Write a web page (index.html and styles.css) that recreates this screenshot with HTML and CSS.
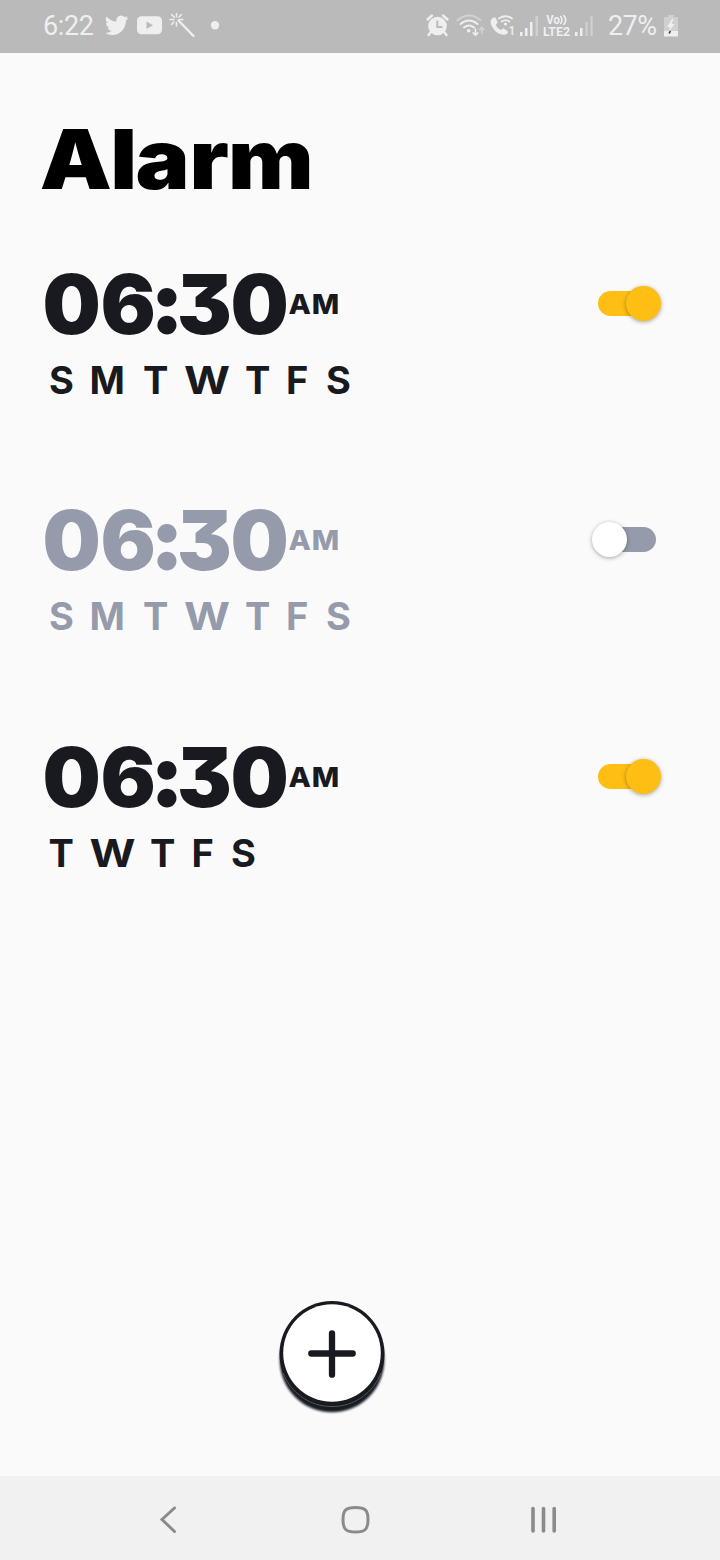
FILE: index.html
```html
<!DOCTYPE html>
<html lang="en">
<head>
<meta charset="utf-8">
<title>Alarm</title>
<link rel="stylesheet" href="styles.css">
</head>
<body>
<div class="screen">
  <header class="status">
    <svg class="status-art" viewBox="0 0 720 53">
      <text class="clock" x="43" y="35" textLength="51">6:22</text>
      <path transform="translate(105 13.3) scale(.97 1)" d="M23.95 4.57a10 10 0 0 1-2.82.77 4.96 4.96 0 0 0 2.16-2.72c-.95.56-2 .96-3.13 1.18a4.92 4.92 0 0 0-8.38 4.48C7.69 8.1 4.07 6.13 1.64 3.16a4.92 4.92 0 0 0 1.52 6.57 4.9 4.9 0 0 1-2.23-.61v.06a4.92 4.92 0 0 0 3.95 4.83 5 5 0 0 1-2.21.08 4.94 4.94 0 0 0 4.6 3.42A9.87 9.87 0 0 1 0 19.54a14 14 0 0 0 7.55 2.21c9.05 0 14-7.5 14-13.98 0-.21 0-.42-.02-.63a9.94 9.94 0 0 0 2.46-2.55z"/>
      <rect x="137" y="16.300" width="25" height="18" rx="4.5"/>
      <path class="cut" d="M146.500 21.500v7.500l6.500-3.700z"/>
      <g class="line">
        <path stroke-width="2.400" d="M178.500 20.500 193.500 36"/>
        <path stroke-width="1.500" d="M176.500 13.500v3.500M176.500 22.500v3.500M170 19.500h4M179.500 19.500h3.500M171.500 14.500l2.800 2.800M181.500 14.500l-2.500 2.500M171.500 24.500l2.500-2.500"/>
      </g>
      <circle cx="215" cy="25.200" r="4.200"/>
      <circle cx="437.500" cy="26" r="9.300"/>
      <g class="line" stroke-width="2.400"><path d="M427.500 19.500l4.500-4M447.500 19.500l-4.500-4M431 32l-2.500 3M444 32l2.500 3"/></g>
      <path class="cut-line" stroke-width="2" d="M437.300 20.500v6.500h5"/>
      <g class="line" stroke-width="2">
        <path class="dim" d="M457.500 20.300q11.500-9.500 23 0"/>
        <path d="M460.500 24q8.500-7 17 0M464 27.500q5-4 10 0"/>
        <path stroke-width="1.600" d="M475.500 29v6M473.200 32.900l2.300 2.300 2.300-2.300"/>
        <path class="dim" stroke-width="1.600" d="M481.800 33.500v-6M479.700 29.600l2.100-2.100 2.100 2.100"/>
      </g>
      <circle cx="468.700" cy="30.700" r="1.800"/>
      <path d="M493.500 17.500c-3 1.500-3.500 4.500-2 8 2.500 5 6 8.300 11.500 9.300 2.500.3 4.500-.8 5.300-3l-4.800-3.600-2.800 1.900c-2.300-1.100-4-2.800-5-5l2-2.700-2.200-4.900z"/>
      <g class="line" stroke-width="1.900"><path d="M499 18.500q6.500-4.500 13 0M501.800 21.500q3.700-2.700 7.500 0"/></g>
      <circle cx="505.500" cy="24" r="1.600"/>
      <text class="sim" x="508.500" y="35">1</text>
      <path d="M520 32h2.500v4H520zM525 28h2.500v8H525zM530 22h2.500v14H530z"/>
      <path class="dim-fill" d="M535.500 16h2.500v20h-2.500z"/>
      <text class="vo" x="546.300" y="24" textLength="13.500" lengthAdjust="spacingAndGlyphs">Vo</text>
      <g class="line" stroke-width="1.600"><path d="M560.700 16.500q2.500 3.500 0 7M563.700 15.500q4 4.500 0 9"/></g>
      <text class="vo" x="543" y="36" textLength="27" lengthAdjust="spacingAndGlyphs">LTE2</text>
      <path d="M575 32h2.500v4H575zM580 28h2.500v8H580z"/>
      <path class="dim-fill" d="M585.500 22h2.200v14h-2.200zM590.500 16h2.200v20h-2.200z"/>
      <text class="clock" x="608" y="35" textLength="49">27%</text>
      <path class="dim-fill" d="M664 17h4v-2h6v2h4v14h-14z"/>
      <path d="M664 31h14v5.500h-14zM672 19l-5 8h3l-1.300 5 6-8h-3.200l2-5z"/>
      <path stroke="#444" stroke-width="1.500" d="M670.500 31l-1.500 2.500"/>
    </svg>
  </header>
  <main class="content">
    <h1 class="title"><svg class="title-art" viewBox="0 0 290 80"><text transform="scale(1.1 1)" x="-2 62 85 134 169" y="68.500">Alarm</text></svg></h1>
    <ul class="alarms">
      <li class="alarm">
        <div class="info">
          <svg class="time" viewBox="0 0 310 70"><text class="digits" x="0.500 58.500" y="64">06<tspan class="colon" x="114.500" y="61">:</tspan><tspan x="135 188.500" y="64">30</tspan></text><text class="period" transform="scale(1.06 1)" x="232.500 254.500" y="44">AM</text></svg>
          <svg class="days" viewBox="0 0 330 50"><text x="7 47.500 101" y="44">SMT<tspan x="142" textLength="46" lengthAdjust="spacingAndGlyphs">W</tspan><tspan x="203 244 284">TFS</tspan></text></svg>
        </div>
        <span class="toggle on"><span class="thumb"></span></span>
      </li>
      <li class="alarm off">
        <div class="info">
          <svg class="time" viewBox="0 0 310 70"><text class="digits" x="0.500 58.500" y="64">06<tspan class="colon" x="114.500" y="61">:</tspan><tspan x="135 188.500" y="64">30</tspan></text><text class="period" transform="scale(1.06 1)" x="232.500 254.500" y="44">AM</text></svg>
          <svg class="days" viewBox="0 0 330 50"><text x="7 47.500 101" y="44">SMT<tspan x="142" textLength="46" lengthAdjust="spacingAndGlyphs">W</tspan><tspan x="203 244 284">TFS</tspan></text></svg>
        </div>
        <span class="toggle"><span class="thumb"></span></span>
      </li>
      <li class="alarm">
        <div class="info">
          <svg class="time" viewBox="0 0 310 70"><text class="digits" x="0.500 58.500" y="64">06<tspan class="colon" x="114.500" y="61">:</tspan><tspan x="135 188.500" y="64">30</tspan></text><text class="period" transform="scale(1.06 1)" x="232.500 254.500" y="44">AM</text></svg>
          <svg class="days" viewBox="0 0 330 50"><text x="6.500" y="44">T<tspan x="47.500" textLength="46" lengthAdjust="spacingAndGlyphs">W</tspan><tspan x="108 149.500 189">TFS</tspan></text></svg>
        </div>
        <span class="toggle on"><span class="thumb"></span></span>
      </li>
    </ul>
    <button class="add" aria-label="Add alarm">
      <svg viewBox="0 0 110 116">
        <defs><filter id="soft"><feGaussianBlur stdDeviation="0.9"/></filter></defs>
        <circle cx="55" cy="61" r="52.300" fill="#191a20" filter="url(#soft)"/>
        <circle cx="55" cy="54.500" r="52.500" fill="#191a20"/>
        <path d="M6 74A52.500 52.500 0 0 0 104 74" fill="none" stroke="#777" stroke-width=".6"/>
        <circle cx="55" cy="54" r="48.800" fill="#fff"/>
        <path d="M55 34.300v41.400M34.300 54.500h41.400" stroke="#191a20" stroke-width="6.300" stroke-linecap="round"/>
      </svg>
    </button>
  </main>
  <nav class="nav">
    <svg class="nav-art" viewBox="0 0 720 84">
      <path stroke-width="3" d="M174.500 32 162 43.500 174.500 55.500"/>
      <path stroke-width="3" d="M355.500 31.500c9.500 0 12.500 2.500 12.500 12.200s-3 12.300-12.500 12.300-12.500-2.600-12.500-12.300 3-12.200 12.500-12.200z"/>
      <path stroke-width="3.600" d="M533 32.500v22.500M543.500 32.500v22.500M554.200 32.500v22.500"/>
    </svg>
  </nav>
</div>
</body>
</html>
```
FILE: styles.css
```css
* { box-sizing: border-box; }
body { margin: 0; background: #fafafa; font-family: Inter, "Liberation Sans", sans-serif; }
svg { display: block; overflow: visible; }
.screen { display: flex; flex-direction: column; width: 720px; height: 1560px; }
.status { height: 53px; background: #bababa; }
.status-art { width: 720px; height: 53px; fill: #efefef; }
.clock { font: 27px Roboto, sans-serif; }
.sim { font: 500 12px Roboto, sans-serif; }
.vo { font: 700 12px Roboto, sans-serif; }
.cut { fill: #bababa; }
.cut-line { fill: none; stroke: #bababa; }
.line { fill: none; stroke: #efefef; stroke-linecap: round; }
.dim { stroke: #d2d2d2; }
.dim-fill { fill: #d0d0d0; }
.content { flex: 1; display: flex; flex-direction: column; padding: 67px 42px 0; }
.title { margin: 0; height: 80px; }
.title-art { width: 290px; height: 80px; font-size: 82.500px; font-weight: 900; fill: #000; }
.alarms { list-style: none; margin: 70px 0 0; padding: 0; }
.alarm { display: flex; justify-content: space-between; height: 236px; fill: #191a20; }
.alarm.off { height: 237px; fill: #969bac; }
.time { width: 310px; height: 70px; }
.digits { font-size: 82px; font-weight: 900; font-feature-settings: "cv09"; }
.colon { font-family: Lato, sans-serif; font-size: 80px; stroke: #191a20; stroke-width: 6px; }
.off .colon { stroke: #969bac; }
.period { font-size: 27.500px; font-weight: 800; }
.days { width: 330px; height: 50px; margin-top: 10px; font-size: 38px; font-weight: 700; }
.toggle { display: flex; align-items: center; width: 58px; height: 25px; margin: 21px 22.500px 0 0; border-radius: 13px; background: #969bac; }
.toggle.on { justify-content: flex-end; background: #ffbe14; }
.thumb { flex: none; width: 35px; height: 35px; margin-left: -5.500px; border-radius: 50%; background: #fff; box-shadow: 0 1px 4px rgba(0, 0, 0, .35); }
.on .thumb { margin: 0 -5px 0 0; background: #ffbe14; }
.add { width: 110px; height: 116px; margin: 320px 0 0 235px; padding: 0; border: 0; background: none; }
.add svg { width: 110px; height: 116px; }
.nav { height: 84px; background: #f1f1f1; }
.nav-art { width: 720px; height: 84px; fill: none; stroke: #8b8b8b; stroke-linecap: round; }
```
